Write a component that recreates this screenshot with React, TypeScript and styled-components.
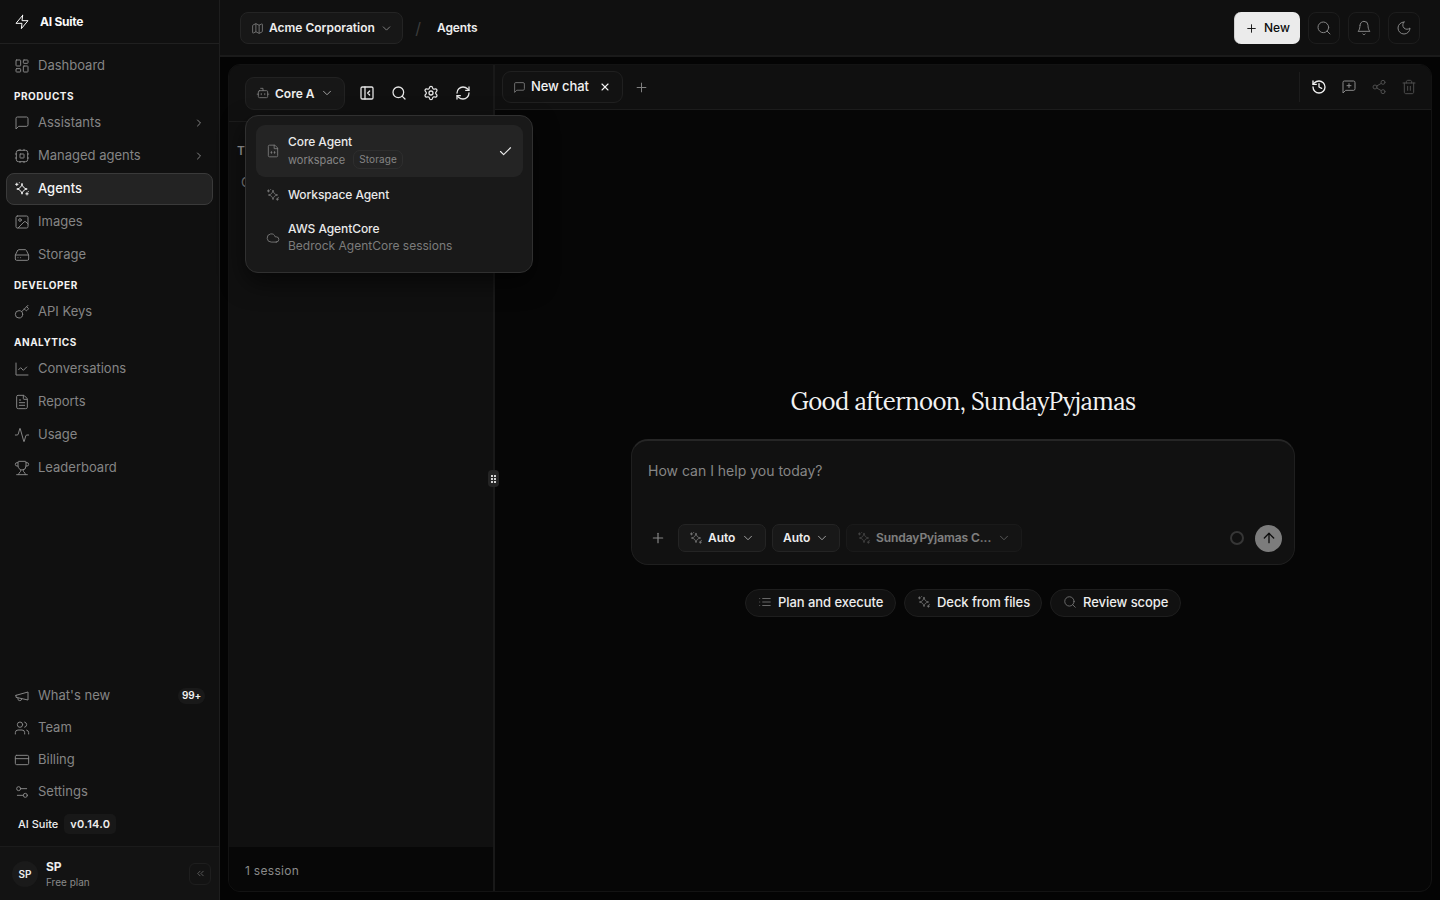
import React from "react";
import styled, { createGlobalStyle, css } from "styled-components";
import {
  Activity,
  ArrowUp,
  Bot,
  Check,
  ChevronDown,
  ChevronRight,
  ChevronsLeft,
  Cloud,
  CreditCard,
  FileText,
  HardDrive,
  History,
  Image as ImageIcon,
  Key,
  LayoutDashboard,
  Map as MapIcon,
  PanelLeftClose,
  Plus,
  RefreshCw,
  Search,
  Settings,
  Settings2,
  Share2,
  Trophy,
  Users,
  X,
} from "lucide-react";

const GlobalStyle = createGlobalStyle`
  * { box-sizing: border-box; }
  body {
    margin: 0;
    background: #040404;
    color: #ededed;
    font-family: Inter, "Liberation Sans", sans-serif;
    font-size: 13px;
    overflow: hidden;
  }
  button { font: inherit; color: inherit; background: none; border: 0; padding: 0; margin: 0; text-align: left; white-space: nowrap; }
  svg { flex: none; display: block; }
`;

type GlyphProps = { size?: number; strokeWidth?: number };

const Glyph = ({ size = 16, strokeWidth = 1.5, children }: GlyphProps & { children: React.ReactNode }) => (
  <svg
    width={size}
    height={size}
    viewBox="0 0 24 24"
    fill="none"
    stroke="currentColor"
    strokeWidth={strokeWidth}
    strokeLinecap="round"
    strokeLinejoin="round"
  >
    {children}
  </svg>
);

const Sparkles = (p: GlyphProps) => (
  <Glyph {...p}>
    <path d="M12 4.2c.9 4.900 2.900 6.900 7.800 7.800-4.900.9-6.900 2.900-7.800 7.800-.9-4.900-2.900-6.900-7.800-7.800 4.900-.9 6.900-2.900 7.800-7.800Z" />
    <path d="M4.200 3.200v3.600M2.400 5h3.600M19.500 17.400v3.600M17.700 19.200h3.600M8 2.600v.01M21.500 16v.01" />
  </Glyph>
);

const Chip = (p: GlyphProps) => (
  <Glyph {...p}>
    <rect x="3.5" y="3.5" width="17" height="17" rx="3" />
    <rect x="9" y="9" width="6" height="6" rx="0.500" />
    <path d="M9 2v1.500M15 2v1.500M9 20.500V22M15 20.500V22M2 9h1.500M2 15h1.500M20.500 9H22M20.500 15H22" />
  </Glyph>
);

const Bolt = (p: GlyphProps) => (
  <Glyph {...p}>
    <path d="M13 2 3 14h9l-1 8 10-12h-9l1-8Z" />
  </Glyph>
);

const Bubble = (p: GlyphProps) => (
  <Glyph {...p}>
    <path d="M21 15a2 2 0 0 1-2 2H7l-4 4V5a2 2 0 0 1 2-2h14a2 2 0 0 1 2 2Z" />
  </Glyph>
);

const BubblePlus = (p: GlyphProps) => (
  <Glyph {...p}>
    <path d="M21 15a2 2 0 0 1-2 2H7l-4 4V5a2 2 0 0 1 2-2h14a2 2 0 0 1 2 2ZM12 7v6M9 10h6" />
  </Glyph>
);

const LineGraph = (p: GlyphProps) => (
  <Glyph {...p}>
    <path d="M3 3v18h18M19 9l-5 5-4-4-3 3" />
  </Glyph>
);

const Horn = (p: GlyphProps) => (
  <Glyph {...p}>
    <path d="m3 11 18-5v12L3 14v-3ZM11.600 16.800a3 3 0 1 1-5.800-1.600" />
  </Glyph>
);

const BellGlyph = (p: GlyphProps) => (
  <Glyph {...p}>
    <path d="M6 8a6 6 0 0 1 12 0c0 7 3 9 3 9H3s3-2 3-9M10.300 21a1.940 1.940 0 0 0 3.400 0" />
  </Glyph>
);

const MoonGlyph = (p: GlyphProps) => (
  <Glyph {...p}>
    <path d="M12 3a6 6 0 0 0 9 9 9 9 0 1 1-9-9Z" />
  </Glyph>
);

const ListGlyph = (p: GlyphProps) => (
  <Glyph {...p}>
    <path d="M8 6h13M8 12h13M8 18h13M3 6h.01M3 12h.01M3 18h.01" />
  </Glyph>
);

const Bin = (p: GlyphProps) => (
  <Glyph {...p}>
    <path d="M3 6h18M19 6v14c0 1-1 2-2 2H7c-1 0-2-1-2-2V6M8 6V4c0-1 1-2 2-2h4c1 0 2 1 2 2v2M10 11v6M14 11v6" />
  </Glyph>
);

const AgentFile = (p: GlyphProps) => (
  <Glyph {...p}>
    <path d="M14.500 2H6a2 2 0 0 0-2 2v16a2 2 0 0 0 2 2h12a2 2 0 0 0 2-2V7.500ZM14 2v6h6" />
    <path d="M9.300 13v3M14.700 13v3M8.500 14.500h1.600M13.900 14.500h1.600" />
  </Glyph>
);

const Shell = styled.div`
  display: flex;
  width: 1440px;
  height: 900px;
`;

/* ---------- Sidebar ---------- */

const Sidebar = styled.aside`
  width: 220px;
  flex: none;
  display: flex;
  flex-direction: column;
  background: #101010;
  border-right: 1px solid #1e1e1e;
`;

const Brand = styled.div`
  height: 44px;
  padding: 0 14px;
  display: flex;
  align-items: center;
  gap: 10px;
  border-bottom: 1px solid #202020;
  font-size: 12px;
  font-weight: 700;
  letter-spacing: -0.25px;
  color: #fafafa;
`;

const Nav = styled.nav<{ $gap: number }>`
  display: flex;
  flex-direction: column;
  gap: ${(p) => p.$gap}px;
  padding: 0 6px;
`;

const MainNav = styled(Nav)`
  padding-top: 6px;
  flex: 1;
`;

const NavItem = styled.a<{ $active?: boolean }>`
  height: 32px;
  flex: none;
  display: flex;
  align-items: center;
  gap: 8px;
  padding: 0 7px;
  border: 1px solid transparent;
  border-radius: 8px;
  color: #858585;
  ${(p) =>
    p.$active &&
    css`
      color: #f5f5f5;
      font-weight: 500;
      background: #232323;
      border-color: #3a3a3a;
    `}
`;

const NavLabel = styled.span`
  flex: 1;
  padding-bottom: 2px;
`;

const NavHeading = styled.div`
  height: 23px;
  flex: none;
  padding: 3px 8px 0;
  display: flex;
  align-items: center;
  font-size: 10px;
  font-weight: 700;
  letter-spacing: 0.52px;
  color: #f2f2f2;
`;

const CountBadge = styled.span`
  height: 16px;
  padding: 0 4px;
  border-radius: 8px;
  background: #191919;
  color: #f0f0f0;
  font-size: 10px;
  font-weight: 600;
  line-height: 15px;
  letter-spacing: -0.2px;
`;

const Version = styled.div`
  height: 38px;
  padding: 0 18px 6px;
  display: flex;
  align-items: center;
  gap: 6px;
  font-size: 11px;
  font-weight: 500;
  color: #ededed;
`;

const VersionTag = styled.span`
  height: 20px;
  padding: 0 6px;
  border-radius: 5px;
  background: #181818;
  line-height: 20px;
  font-weight: 600;
  letter-spacing: 0.3px;
`;

const Account = styled.div`
  height: 54px;
  padding: 0 8px 0 12px;
  display: flex;
  align-items: center;
  gap: 8px;
  background: #131313;
  border-top: 1px solid #1b1b1b;
`;

const Avatar = styled.div`
  width: 26px;
  height: 26px;
  border-radius: 50%;
  background: #1a1a1a;
  display: grid;
  place-items: center;
  font-size: 10px;
  font-weight: 600;
`;

const AccountText = styled.div`
  flex: 1;
  display: flex;
  flex-direction: column;
  padding-top: 1px;
`;

const AccountName = styled.span`
  font-size: 12px;
  line-height: 16px;
  font-weight: 700;
`;

const AccountPlan = styled.span`
  font-size: 10px;
  line-height: 14px;
  color: #8a8a8a;
`;

const CollapseButton = styled.button`
  width: 22px;
  height: 22px;
  display: grid;
  place-items: center;
  border: 1px solid #1e1e1e;
  border-radius: 6px;
  color: #777;
`;

/* ---------- Header ---------- */

const Page = styled.div`
  flex: 1;
  min-width: 0;
  display: flex;
  flex-direction: column;
`;

const Header = styled.header`
  height: 57px;
  flex: none;
  padding: 1px 20px 0;
  display: flex;
  align-items: center;
  background: #101010;
  border-bottom: 2px solid #1a1a1a;
`;

const Crumbs = styled.div`
  flex: 1;
  display: flex;
  align-items: center;
  font-size: 12px;
  font-weight: 600;
  letter-spacing: -0.12px;
`;

const OrgButton = styled.button`
  width: 163px;
  height: 32px;
  padding: 0 9px 0 10px;
  display: flex;
  align-items: center;
  gap: 5px;
  border: 1px solid #242424;
  border-radius: 8px;
  background: #171717;
  letter-spacing: 0;
  color: #ededed;
`;

const CrumbText = styled.span`
  flex: 1;
  padding-bottom: 2px;
`;

const Muted = styled.span<{ $tone?: string }>`
  display: inline-flex;
  color: ${(p) => p.$tone ?? "#7c7c7c"};
`;

const Slash = styled.span`
  width: 34px;
  padding: 0 4px 1px 0;
  text-align: center;
  color: #3c3c3c;
  font-size: 16px;
  font-weight: 400;
`;

const HeaderActions = styled.div`
  display: flex;
  gap: 8px;
`;

const NewButton = styled.button`
  width: 66px;
  height: 32px;
  padding: 0 10px;
  display: flex;
  align-items: center;
  gap: 6px;
  border: 1px solid #cfcfcf;
  border-width: 0 0 0 1px;
  border-radius: 7px;
  background: #ebebeb;
  color: #0c0c0c;
  font-weight: 500;
  font-size: 12px;
`;

const SquareButton = styled.button`
  width: 32px;
  height: 32px;
  display: grid;
  place-items: center;
  border: 1px solid #1d1d1d;
  border-radius: 8px;
  color: #858585;
`;

/* ---------- Workspace ---------- */

const Workspace = styled.main`
  flex: 1;
  margin: 7px 8px 8px;
  display: flex;
  border: 1px solid #131313;
  border-radius: 12px;
  background: #060606;
  position: relative;
`;

const SessionPanel = styled.section`
  width: 266px;
  flex: none;
  display: flex;
  flex-direction: column;
  position: relative;
  background: #101010;
  border-right: 2px solid #191919;
  border-radius: 11px 0 0 11px;
`;

const SessionBar = styled.div`
  height: 57px;
  padding: 0 14px 0 16px;
  display: flex;
  align-items: center;
  border-bottom: 1px solid #1c1c1c;
`;

const AgentPicker = styled.button`
  width: 100px;
  height: 33px;
  margin-right: 6px;
  padding: 0 10px;
  display: flex;
  align-items: center;
  gap: 5px;
  border: 1px solid #222;
  border-radius: 9px;
  background: #171717;
  font-size: 12px;
  font-weight: 600;
`;

const PickerName = styled.span`
  flex: 1;
`;

const ToolButton = styled.button`
  width: 32px;
  height: 32px;
  display: grid;
  place-items: center;
  color: #e6e6e6;
`;

const SessionList = styled.div`
  flex: 1;
  padding: 21px 8px;
  display: flex;
  flex-direction: column;
  gap: 15px;
`;

const DayLabel = styled.div`
  font-size: 12px;
  line-height: 16px;
  font-weight: 600;
  letter-spacing: 0.6px;
  text-transform: uppercase;
  color: #9a9a9a;
`;

const SessionRow = styled.div`
  padding-left: 4px;
  line-height: 17px;
  color: #858585;
`;

const SessionFooter = styled.div`
  height: 44px;
  padding: 2px 16px 0;
  display: flex;
  align-items: center;
  background: #070707;
  border-bottom-left-radius: 11px;
  color: #8a8a8a;
  font-size: 12px;
  letter-spacing: 0.3px;
`;

const Grip = styled.div`
  position: absolute;
  right: -6px;
  top: 405px;
  width: 11px;
  height: 17px;
  border-radius: 4px;
  background: #242424;
  display: grid;
  grid-template-columns: repeat(2, 2px);
  grid-auto-rows: 2px;
  gap: 1px;
  place-content: center;
`;

const GripDot = styled.i`
  background: #d2d2d2;
`;

/* ---------- Agent menu ---------- */

const Menu = styled.div`
  position: absolute;
  left: 16px;
  top: 50px;
  z-index: 5;
  width: 288px;
  height: 158px;
  padding: 9px 9px 9px 10px;
  display: flex;
  flex-direction: column;
  border: 1px solid #303030;
  border-radius: 13px;
  background: #191919;
  box-shadow: 0 10px 24px rgba(0, 0, 0, 0.55);
`;

const MenuItem = styled.div<{ $height: number; $selected?: boolean }>`
  height: ${(p) => p.$height}px;
  flex: none;
  padding: 0 10px;
  display: flex;
  align-items: center;
  gap: 8px;
  border-radius: 9px;
  background: ${(p) => (p.$selected ? "#242424" : "transparent")};
`;

const MenuText = styled.div`
  flex: 1;
`;

const MenuTitle = styled.div`
  padding-bottom: 1px;
  font-size: 12px;
  line-height: 16px;
  font-weight: 550;
  letter-spacing: -0.08px;
  color: #e9e9e9;
`;

const MenuMeta = styled.div`
  height: 18px;
  display: flex;
  align-items: center;
  gap: 8px;
  font-size: 11px;
  color: #858585;
`;

const MenuDetail = styled.div`
  margin-top: -1px;
  font-size: 12px;
  line-height: 17px;
  color: #7c7c7c;
`;

const StorageTag = styled.span`
  height: 19px;
  padding: 0 5px;
  border: 1px solid #2e2e2e;
  border-radius: 7px;
  font-size: 10px;
  line-height: 17px;
  letter-spacing: 0.1px;
`;

/* ---------- Chat ---------- */

const Chat = styled.section`
  flex: 1;
  min-width: 0;
  display: flex;
  flex-direction: column;
`;

const TabBar = styled.div`
  height: 45px;
  flex: none;
  padding: 0 7px;
  display: flex;
  align-items: center;
  background: #101010;
  border-bottom: 1px solid #1c1c1c;
  border-top-right-radius: 11px;
`;

const Tab = styled.div`
  width: 121px;
  height: 32px;
  padding: 0 11px 0 10px;
  display: flex;
  align-items: center;
  gap: 5px;
  border: 1px solid #202020;
  border-radius: 9px;
  background: #121212;
  font-weight: 500;
  letter-spacing: -0.1px;
  color: #f2f2f2;
`;

const TabTitle = styled.span`
  flex: 1;
  padding-bottom: 2px;
`;

const AddTab = styled.button`
  width: 36px;
  height: 32px;
  display: grid;
  place-items: center;
  color: #808080;
`;

const TabActions = styled.div`
  margin-left: auto;
  height: 30px;
  padding-left: 4px;
  display: flex;
  align-items: center;
  border-left: 1px solid #1c1c1c;
`;

const TabAction = styled.button<{ $tone: string }>`
  width: 30px;
  height: 30px;
  display: grid;
  place-items: center;
  color: ${(p) => p.$tone};
`;

const ChatBody = styled.div`
  flex: 1;
  display: flex;
  flex-direction: column;
  align-items: center;
  padding-top: 274px;
`;

const Greeting = styled.h1`
  margin: 0 0 19px;
  font-family: Lora, "Liberation Serif", serif;
  font-size: 24px;
  line-height: 36px;
  font-weight: 400;
  letter-spacing: -0.6px;
  color: #f2f2f2;
  white-space: nowrap;
`;

const Composer = styled.div`
  width: 664px;
  height: 126px;
  padding: 20px 12px 12px 16px;
  display: flex;
  flex-direction: column;
  justify-content: space-between;
  border: 1px solid #1f1f1f;
  border-top: 2px solid #262626;
  border-radius: 17px;
  background: #111;
`;

const Placeholder = styled.div`
  font-size: 14px;
  line-height: 20px;
  color: #868686;
`;

const ComposerRow = styled.div`
  display: flex;
  align-items: center;
  gap: 6px;
`;

const AttachButton = styled.button`
  width: 20px;
  margin-right: 4px;
  display: grid;
  place-items: center;
  color: #858585;
`;

const Select = styled.button<{ $width: number; $dim?: boolean }>`
  width: ${(p) => p.$width}px;
  height: 28px;
  padding: 0 10px;
  display: flex;
  align-items: center;
  gap: 5px;
  border: 1px solid #242424;
  border-radius: 7px;
  background: #181818;
  font-size: 12px;
  font-weight: 600;
  letter-spacing: -0.06px;
  color: #ededed;
  opacity: ${(p) => (p.$dim ? 0.5 : 1)};
`;

const SelectText = styled.span`
  flex: 1;
  padding-bottom: 1px;
`;

const UsageRing = styled.span`
  width: 14px;
  height: 14px;
  margin: 0 5px 0 auto;
  border: 2px solid #363636;
  border-radius: 50%;
`;

const SendButton = styled.button`
  width: 27px;
  height: 27px;
  display: grid;
  place-items: center;
  border-radius: 50%;
  background: #7c7c7c;
  color: #0d0d0d;
`;

const Suggestions = styled.div`
  display: flex;
  gap: 8px;
  margin-top: 24px;
`;

const Suggestion = styled.button<{ $width: number }>`
  width: ${(p) => p.$width}px;
  height: 28px;
  padding: 0 12px 2px;
  display: flex;
  align-items: center;
  gap: 6px;
  border: 1px solid #1e1e1e;
  border-radius: 14px;
  background: #111;
  font-weight: 500;
  letter-spacing: -0.06px;
`;

type Entry = { label: string; icon: React.ReactNode; expandable?: boolean; active?: boolean; badge?: string };

const thin = { size: 16, strokeWidth: 1.5 };
const medium = { size: 16, strokeWidth: 1.9 };

const products: Entry[] = [
  { label: "Assistants", icon: <Bubble {...thin} />, expandable: true },
  { label: "Managed agents", icon: <Chip {...thin} />, expandable: true },
  { label: "Agents", icon: <Sparkles {...thin} />, active: true },
  { label: "Images", icon: <ImageIcon {...thin} /> },
  { label: "Storage", icon: <HardDrive {...thin} /> },
];

const analytics: Entry[] = [
  { label: "Conversations", icon: <LineGraph {...thin} /> },
  { label: "Reports", icon: <FileText {...thin} /> },
  { label: "Usage", icon: <Activity {...thin} /> },
  { label: "Leaderboard", icon: <Trophy {...thin} /> },
];

const support: Entry[] = [
  { label: "What's new", icon: <Horn {...thin} />, badge: "99+" },
  { label: "Team", icon: <Users {...thin} /> },
  { label: "Billing", icon: <CreditCard {...thin} /> },
  { label: "Settings", icon: <Settings2 {...thin} /> },
];

const NavEntry = ({ label, icon, expandable, active, badge }: Entry) => (
  <NavItem $active={active}>
    {icon}
    <NavLabel>{label}</NavLabel>
    {expandable && <ChevronRight size={12} strokeWidth={2} />}
    {badge && <CountBadge>{badge}</CountBadge>}
  </NavItem>
);

const Caret = ({ size = 14, tone = "#a0a0a0" }: { size?: number; tone?: string }) => (
  <Muted $tone={tone}>
    <ChevronDown size={size} strokeWidth={1.7} />
  </Muted>
);

export default function App() {
  return (
    <Shell>
      <GlobalStyle />
      <Sidebar>
        <Brand>
          <Bolt {...thin} />
          AI Suite
        </Brand>
        <MainNav $gap={1}>
          <NavEntry label="Dashboard" icon={<LayoutDashboard {...thin} />} />
          <NavHeading>PRODUCTS</NavHeading>
          {products.map((e) => (
            <NavEntry key={e.label} {...e} />
          ))}
          <NavHeading>DEVELOPER</NavHeading>
          <NavEntry label="API Keys" icon={<Key {...thin} />} />
          <NavHeading>ANALYTICS</NavHeading>
          {analytics.map((e) => (
            <NavEntry key={e.label} {...e} />
          ))}
        </MainNav>
        <Nav $gap={0}>
          {support.map((e) => (
            <NavEntry key={e.label} {...e} />
          ))}
        </Nav>
        <Version>
          AI Suite <VersionTag>v0.14.0</VersionTag>
        </Version>
        <Account>
          <Avatar>SP</Avatar>
          <AccountText>
            <AccountName>SP</AccountName>
            <AccountPlan>Free plan</AccountPlan>
          </AccountText>
          <CollapseButton>
            <ChevronsLeft size={11} strokeWidth={1.5} />
          </CollapseButton>
        </Account>
      </Sidebar>

      <Page>
        <Header>
          <Crumbs>
            <OrgButton>
              <Muted><MapIcon size={13} strokeWidth={1.6} /></Muted>
              <CrumbText>Acme Corporation</CrumbText>
              <Caret size={13} tone="#868686" />
            </OrgButton>
            <Slash>/</Slash>
            <CrumbText>Agents</CrumbText>
          </Crumbs>
          <HeaderActions>
            <NewButton>
              <Plus size={13} strokeWidth={1.7} />
              <CrumbText>New</CrumbText>
            </NewButton>
            <SquareButton><Search {...thin} /></SquareButton>
            <SquareButton><BellGlyph {...thin} /></SquareButton>
            <SquareButton><MoonGlyph {...thin} /></SquareButton>
          </HeaderActions>
        </Header>

        <Workspace>
          <SessionPanel>
            <SessionBar>
              <AgentPicker>
                <Muted><Bot size={14} strokeWidth={1.5} /></Muted>
                <PickerName>Core A</PickerName>
                <Caret />
              </AgentPicker>
              <ToolButton><PanelLeftClose {...medium} /></ToolButton>
              <ToolButton><Search {...medium} /></ToolButton>
              <ToolButton><Settings {...medium} /></ToolButton>
              <ToolButton><RefreshCw {...medium} /></ToolButton>
            </SessionBar>
            <SessionList>
              <DayLabel>Today</DayLabel>
              <SessionRow>Chat</SessionRow>
            </SessionList>
            <SessionFooter>1 session</SessionFooter>
            <Grip>
              {Array.from({ length: 6 }, (_, i) => (
                <GripDot key={i} />
              ))}
            </Grip>
          </SessionPanel>

          <Chat>
            <TabBar>
              <Tab>
                <Muted><Bubble size={13} strokeWidth={1.6} /></Muted>
                <TabTitle>New chat</TabTitle>
                <X size={12} strokeWidth={2.2} />
              </Tab>
              <AddTab><Plus size={15} strokeWidth={1.6} /></AddTab>
              <TabActions>
                <TabAction $tone="#f0f0f0"><History size={16} strokeWidth={2} /></TabAction>
                <TabAction $tone="#8a8a8a"><BubblePlus {...thin} /></TabAction>
                <TabAction $tone="#4c4c4c"><Share2 {...thin} /></TabAction>
                <TabAction $tone="#4c4c4c"><Bin {...thin} /></TabAction>
              </TabActions>
            </TabBar>
            <ChatBody>
              <Greeting>Good afternoon, SundayPyjamas</Greeting>
              <Composer>
                <Placeholder>How can I help you today?</Placeholder>
                <ComposerRow>
                  <AttachButton><Plus size={16} strokeWidth={1.8} /></AttachButton>
                  <Select $width={88}>
                    <Muted><Sparkles size={14} strokeWidth={1.5} /></Muted>
                    <SelectText>Auto</SelectText>
                    <Caret />
                  </Select>
                  <Select $width={68}>
                    <SelectText>Auto</SelectText>
                    <Caret />
                  </Select>
                  <Select $width={176} $dim>
                    <Muted><Sparkles size={14} strokeWidth={1.5} /></Muted>
                    <SelectText>SundayPyjamas C...</SelectText>
                    <Caret />
                  </Select>
                  <UsageRing />
                  <SendButton><ArrowUp size={16} strokeWidth={2} /></SendButton>
                </ComposerRow>
              </Composer>
              <Suggestions>
                <Suggestion $width={151}>
                  <Muted><ListGlyph size={14} strokeWidth={1.4} /></Muted>
                  Plan and execute
                </Suggestion>
                <Suggestion $width={138}>
                  <Muted><Sparkles size={14} strokeWidth={1.4} /></Muted>
                  Deck from files
                </Suggestion>
                <Suggestion $width={131}>
                  <Muted><Search size={14} strokeWidth={1.4} /></Muted>
                  Review scope
                </Suggestion>
              </Suggestions>
            </ChatBody>
          </Chat>

          <Menu>
            <MenuItem $height={52} $selected>
              <Muted><AgentFile size={14} strokeWidth={1.5} /></Muted>
              <MenuText>
                <MenuTitle>Core Agent</MenuTitle>
                <MenuMeta>
                  workspace <StorageTag>Storage</StorageTag>
                </MenuMeta>
              </MenuText>
              <Check size={15} strokeWidth={1.8} />
            </MenuItem>
            <MenuItem $height={36}>
              <Muted><Sparkles size={14} strokeWidth={1.5} /></Muted>
              <MenuTitle>Workspace Agent</MenuTitle>
            </MenuItem>
            <MenuItem $height={49}>
              <Muted><Cloud size={14} strokeWidth={1.5} /></Muted>
              <MenuText>
                <MenuTitle>AWS AgentCore</MenuTitle>
                <MenuDetail>Bedrock AgentCore sessions</MenuDetail>
              </MenuText>
            </MenuItem>
          </Menu>
        </Workspace>
      </Page>
    </Shell>
  );
}
